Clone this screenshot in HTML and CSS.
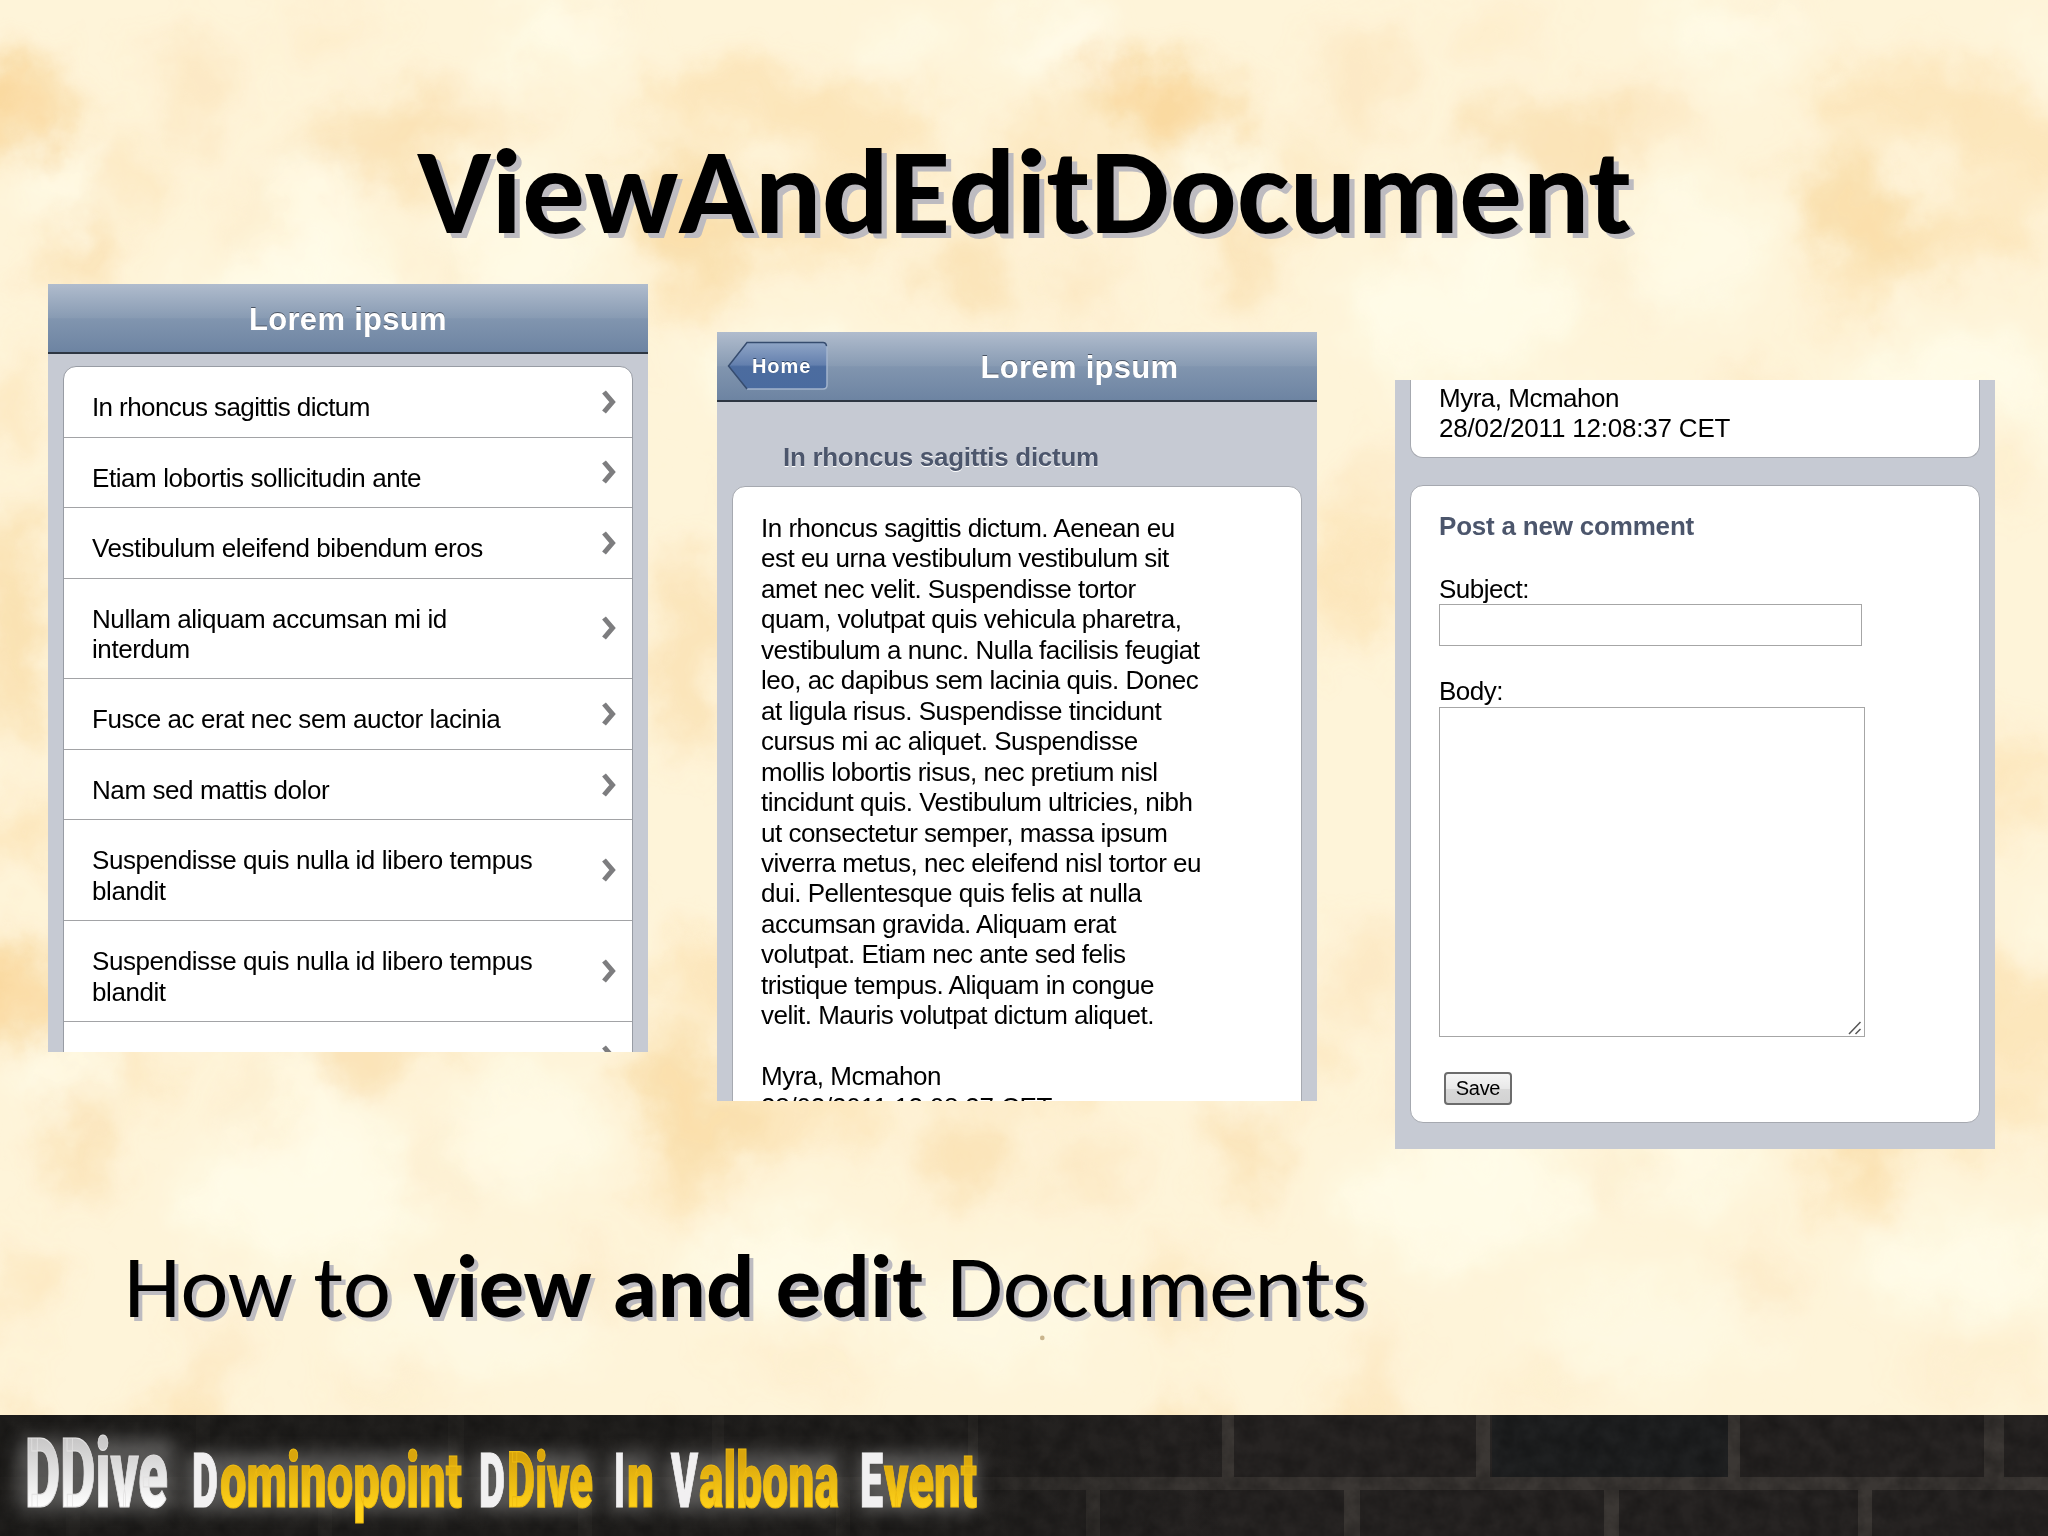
FILE: index.html
```html
<!DOCTYPE html>
<html lang="en">
  <head>
    <meta charset="UTF-8" />
    <meta name="viewport" content="width=device-width, initial-scale=1.0" />
    <title>ViewAndEditDocument</title>
    <link rel="stylesheet" href="styles.css">
  </head>
  <body>
    <div class="slide">
      <!-- parchment: one tile, repeated -->
      <svg class="paper" viewBox="0 0 1568 1083" preserveAspectRatio="none" aria-hidden="true">
        <defs>
          <filter id="rough" x="-5%" y="-5%" width="110%" height="110%">
            <feGaussianBlur stdDeviation="15" result="soft" />
            <feTurbulence type="fractalNoise" baseFrequency="0.02" numOctaves="5" seed="8" result="noise" />
            <feDisplacementMap in="soft" in2="noise" scale="60" xChannelSelector="R" yChannelSelector="G" />
          </filter>
          <g id="tile">
            <g fill="#f8cd86">
              <ellipse cx="15" cy="85" rx="48" ry="36" opacity=".55" />
              <ellipse cx="-30" cy="68" rx="50" ry="26" opacity=".5" />
              <ellipse cx="150" cy="65" rx="32" ry="42" opacity=".25" />
              <ellipse cx="100" cy="135" rx="22" ry="30" opacity=".3" />
              <ellipse cx="290" cy="110" rx="60" ry="34" opacity=".4" />
              <ellipse cx="360" cy="90" rx="50" ry="22" opacity=".25" />
              <ellipse cx="560" cy="75" rx="70" ry="30" opacity=".35" />
              <ellipse cx="660" cy="105" rx="60" ry="40" opacity=".35" />
              <ellipse cx="515" cy="145" rx="36" ry="30" opacity=".5" />
              <ellipse cx="545" cy="185" rx="40" ry="28" opacity=".5" />
              <ellipse cx="525" cy="228" rx="28" ry="24" opacity=".35" />
              <ellipse cx="620" cy="175" rx="60" ry="24" opacity=".35" />
              <ellipse cx="740" cy="205" rx="36" ry="34" opacity=".4" />
              <ellipse cx="800" cy="130" rx="44" ry="40" opacity=".3" />
              <ellipse cx="830" cy="220" rx="30" ry="30" opacity=".25" />
              <ellipse cx="60" cy="200" rx="24" ry="34" opacity=".4" />
              <ellipse cx="350" cy="205" rx="22" ry="30" opacity=".25" />
              <ellipse cx="200" cy="165" rx="22" ry="34" opacity=".25" />
              <ellipse cx="460" cy="12" rx="18" ry="12" opacity=".5" />
              <ellipse cx="250" cy="20" rx="40" ry="14" opacity=".2" />
              <ellipse cx="160" cy="367" rx="18" ry="30" opacity=".25" />
              <ellipse cx="300" cy="385" rx="50" ry="20" opacity=".12" />
              <ellipse cx="446" cy="305" rx="24" ry="28" opacity=".25" />
              <ellipse cx="620" cy="365" rx="60" ry="18" opacity=".12" />
              <ellipse cx="12" cy="310" rx="20" ry="34" opacity=".3" />
              <ellipse cx="10" cy="480" rx="24" ry="90" opacity=".5" />
              <ellipse cx="525" cy="500" rx="28" ry="80" opacity=".4" />
              <ellipse cx="140" cy="440" rx="30" ry="60" opacity=".35" />
              <ellipse cx="640" cy="600" rx="24" ry="40" opacity=".35" />
              <ellipse cx="20" cy="640" rx="30" ry="30" opacity=".35" />
            </g>
            <g fill="#fffdec">
              <ellipse cx="430" cy="26" rx="52" ry="26" opacity=".7" />
              <ellipse cx="810" cy="30" rx="50" ry="24" opacity=".8" />
              <ellipse cx="690" cy="34" rx="34" ry="16" opacity=".6" />
              <ellipse cx="240" cy="170" rx="44" ry="44" opacity=".6" />
              <ellipse cx="50" cy="140" rx="34" ry="20" opacity=".7" />
              <ellipse cx="400" cy="190" rx="60" ry="50" opacity=".6" />
              <ellipse cx="230" cy="240" rx="90" ry="50" opacity=".7" />
              <ellipse cx="610" cy="290" rx="80" ry="34" opacity=".7" />
              <ellipse cx="760" cy="330" rx="90" ry="40" opacity=".5" />
              <ellipse cx="370" cy="340" rx="100" ry="36" opacity=".5" />
            </g>
          </g>
        </defs>
        <rect width="1568" height="1083" fill="#fef4d9" />
        <g filter="url(#rough)">
          <use href="#tile" />
          <use href="#tile" x="894" />
          <use href="#tile" y="679" />
          <use href="#tile" x="894" y="679" />
        </g>
        <circle cx="798" cy="1024" r="1.8" fill="#c9b48c" />
      </svg>

      <h1 class="title">
        <svg width="2048" height="284" role="img">
          <text x="417" y="233" textLength="1215" lengthAdjust="spacingAndGlyphs">ViewAndEditDocument</text>
        </svg>
      </h1>

      <div class="screens">
        <div class="phone list-view">
          <div class="toolbar"><span class="bar-title">Lorem ipsum</span></div>
          <ul class="items">
            <li><span class="tight">In rhoncus sagittis dictum</span><svg class="arrow" viewBox="0 0 14 24"><path d="M2 2L10.500 12L2 22" /></svg></li>
            <li><span>Etiam lobortis sollicitudin ante</span><svg class="arrow" viewBox="0 0 14 24"><path d="M2 2L10.500 12L2 22" /></svg></li>
            <li><span>Vestibulum eleifend bibendum eros</span><svg class="arrow" viewBox="0 0 14 24"><path d="M2 2L10.500 12L2 22" /></svg></li>
            <li><span>Nullam aliquam accumsan mi id<br>interdum</span><svg class="arrow" viewBox="0 0 14 24"><path d="M2 2L10.500 12L2 22" /></svg></li>
            <li><span>Fusce ac erat nec sem auctor lacinia</span><svg class="arrow" viewBox="0 0 14 24"><path d="M2 2L10.500 12L2 22" /></svg></li>
            <li><span>Nam sed mattis dolor</span><svg class="arrow" viewBox="0 0 14 24"><path d="M2 2L10.500 12L2 22" /></svg></li>
            <li><span>Suspendisse quis nulla id libero tempus<br>blandit</span><svg class="arrow" viewBox="0 0 14 24"><path d="M2 2L10.500 12L2 22" /></svg></li>
            <li><span>Suspendisse quis nulla id libero tempus<br>blandit</span><svg class="arrow" viewBox="0 0 14 24"><path d="M2 2L10.500 12L2 22" /></svg></li>
            <li><svg class="arrow" viewBox="0 0 14 24"><path d="M2 2L10.500 12L2 22" /></svg></li>
          </ul>
        </div>

        <div class="phone document-view">
          <div class="toolbar">
            <a class="back">
              <svg viewBox="0 0 102 50">
                <defs>
                  <linearGradient id="backFill" x1="0" y1="0" x2="0" y2="1">
                    <stop offset="0" stop-color="#8fa5c6" />
                    <stop offset=".48" stop-color="#6480ae" />
                    <stop offset=".52" stop-color="#4c6c9f" />
                    <stop offset="1" stop-color="#4a6b9f" />
                  </linearGradient>
                </defs>
                <path d="M20 1.500H96Q100 1.500 100 6V44Q100 48 96 48H20L1.500 25Z" fill="url(#backFill)" />
                <path d="M100 6V44Q100 48 96 48H20" fill="none" stroke="#a3b4cd" stroke-width="1.500" />
                <path d="M20 48L1.500 25L20 1.500H96Q99 1.500 99.500 5" fill="none" stroke="#364c6f" stroke-width="1.500" />
              </svg>
              <span>Home</span>
            </a>
            <span class="bar-title">Lorem ipsum</span>
          </div>
          <h2>In rhoncus sagittis dictum</h2>
          <div class="card">
            <p>
              In rhoncus sagittis dictum. Aenean eu<br>
              est eu urna vestibulum vestibulum sit<br>
              amet nec velit. Suspendisse tortor<br>
              quam, volutpat quis vehicula pharetra,<br>
              vestibulum a nunc. Nulla facilisis feugiat<br>
              leo, ac dapibus sem lacinia quis. Donec<br>
              at ligula risus. Suspendisse tincidunt<br>
              cursus mi ac aliquet. Suspendisse<br>
              mollis lobortis risus, nec pretium nisl<br>
              tincidunt quis. Vestibulum ultricies, nibh<br>
              ut consectetur semper, massa ipsum<br>
              viverra metus, nec eleifend nisl tortor eu<br>
              dui. Pellentesque quis felis at nulla<br>
              accumsan gravida. Aliquam erat<br>
              volutpat. Etiam nec ante sed felis<br>
              tristique tempus. Aliquam in congue<br>
              velit. Mauris volutpat dictum aliquet.<br>
              <br>
              Myra, Mcmahon<br>
              <span class="date">28/02/2011 12:08:37 CET</span>
            </p>
          </div>
        </div>

        <div class="phone comment-view">
          <div class="card author">
            <p>Myra, Mcmahon<br><span class="date">28/02/2011 12:08:37 CET</span></p>
          </div>
          <form class="card comment">
            <h3>Post a new comment</h3>
            <label for="subject">Subject:</label>
            <input type="text" id="subject" />
            <label for="body">Body:</label>
            <div class="area">
              <textarea id="body"></textarea>
              <svg class="grip" viewBox="0 0 14 14"><path d="M1 13L12.500 1M7.500 13L12.500 8" /></svg>
            </div>
            <button type="button">Save</button>
          </form>
        </div>
      </div>

      <div class="caption">
        <svg width="2048" height="120" role="img">
          <text x="124" y="97" textLength="267" lengthAdjust="spacingAndGlyphs">How to</text>
          <text class="strong" x="413" y="97" textLength="511" lengthAdjust="spacingAndGlyphs">view and edit</text>
          <text x="947" y="97" textLength="420" lengthAdjust="spacingAndGlyphs">Documents</text>
        </svg>
      </div>

      <div class="footer">
        <svg width="2048" height="121" role="img">
          <defs>
            <linearGradient id="silver" x1="0" y1="0" x2="0" y2="1">
              <stop offset=".2" stop-color="#c9c8c8" />
              <stop offset=".8" stop-color="#fff" />
            </linearGradient>
            <linearGradient id="gold" x1="0" y1="0" x2="0" y2="1">
              <stop offset=".25" stop-color="#d9a50c" />
              <stop offset=".8" stop-color="#ffd21a" />
            </linearGradient>
            <linearGradient id="fade">
              <stop offset="0" stop-color="#1e1d1b" stop-opacity=".85" />
              <stop offset=".45" stop-color="#1e1d1b" stop-opacity=".65" />
              <stop offset=".6" stop-color="#1e1d1b" stop-opacity="0" />
            </linearGradient>
            <filter id="grain" x="0" y="0" width="100%" height="100%">
              <feTurbulence type="fractalNoise" baseFrequency="0.05" numOctaves="4" seed="3" />
              <feColorMatrix values="0 0 0 0 0  0 0 0 0 0  0 0 0 0 0  1.200 0 0 0 -.35" />
            </filter>
            <filter id="halo" x="-10%" y="-50%" width="120%" height="200%">
              <feGaussianBlur stdDeviation="9" />
            </filter>
          </defs>
          <rect width="2048" height="121" fill="#272423" />
          <rect x="1492" width="236" height="62" fill="#1f2021" />
          <g fill="#3b3734">
            <rect y="62" width="2048" height="13" />
            <rect x="196" width="14" height="62" />
            <rect x="448" width="16" height="62" />
            <rect x="712" width="12" height="62" />
            <rect x="968" width="10" height="62" />
            <rect x="1222" width="12" height="62" />
            <rect x="1476" width="14" height="62" />
            <rect x="1728" width="12" height="62" />
            <rect x="1984" width="20" height="62" />
            <rect x="66" y="75" width="14" height="46" />
            <rect x="318" y="75" width="14" height="46" />
            <rect x="578" y="75" width="14" height="46" />
            <rect x="836" y="75" width="14" height="46" />
            <rect x="1086" y="75" width="14" height="46" />
            <rect x="1344" y="75" width="16" height="46" />
            <rect x="1604" y="75" width="15" height="46" />
            <rect x="1858" y="75" width="14" height="46" />
          </g>
          <rect width="2048" height="121" fill="url(#fade)" />
          <rect width="2048" height="121" filter="url(#grain)" opacity=".4" />
          <g filter="url(#halo)" fill="#fff" opacity=".26">
            <rect x="18" y="24" width="156" height="72" />
            <rect x="186" y="38" width="276" height="58" />
            <rect x="476" y="38" width="116" height="58" />
            <rect x="610" y="38" width="44" height="58" />
            <rect x="668" y="38" width="172" height="58" />
            <rect x="858" y="38" width="120" height="58" />
          </g>
          <g class="logo">
            <text class="big" x="25" y="107" textLength="143" lengthAdjust="spacingAndGlyphs">DDive</text>
            <text class="cap" x="192" y="107" textLength="26" lengthAdjust="spacingAndGlyphs">D</text>
            <text x="220" y="107" textLength="242" lengthAdjust="spacingAndGlyphs">ominopoint</text>
            <text class="cap" x="479" y="107" textLength="26" lengthAdjust="spacingAndGlyphs">D</text>
            <text x="507" y="107" textLength="86" lengthAdjust="spacingAndGlyphs">Dive</text>
            <text class="cap" x="614" y="107" textLength="11" lengthAdjust="spacingAndGlyphs">I</text>
            <text x="627" y="107" textLength="27" lengthAdjust="spacingAndGlyphs">n</text>
            <text class="cap" x="671" y="107" textLength="27" lengthAdjust="spacingAndGlyphs">V</text>
            <text x="699" y="107" textLength="140" lengthAdjust="spacingAndGlyphs">albona</text>
            <text class="cap" x="860" y="107" textLength="23" lengthAdjust="spacingAndGlyphs">E</text>
            <text x="884" y="107" textLength="93" lengthAdjust="spacingAndGlyphs">vent</text>
          </g>
        </svg>
      </div>
    </div>
  </body>
</html>
```
FILE: styles.css
```css
* {
  box-sizing: border-box;
}
body {
  margin: 0;
}
.slide {
  position: relative;
  width: 2048px;
  height: 1536px;
  overflow: hidden;
  display: flex;
  flex-direction: column;
}
.paper {
  position: absolute;
  left: 0;
  top: 0;
  width: 2048px;
  height: 1415px;
  z-index: -1;
}
svg {
  display: block;
}
.title,
.caption {
  margin: 0;
  font-family: Carlito, Lato, sans-serif;
}
.title text {
  font-size: 122px;
  font-weight: bold;
  text-shadow: 5px 5px 0 #bdbbc0;
}
.caption {
  height: 195px;
}
.caption text {
  font-size: 89px;
  font-weight: normal;
  text-shadow: 4px 4px 0 #bdbbc0;
}
.caption .strong {
  font-weight: bold;
}

/* phone screens */
.screens {
  display: flex;
  align-items: flex-start;
  height: 936px;
  padding-left: 48px;
  font-family: Arial, "Liberation Sans", sans-serif;
  font-size: 26px;
  line-height: 30.46px;
  letter-spacing: -0.5px;
  white-space: nowrap;
}
.phone {
  width: 600px;
  height: 768px;
  overflow: hidden;
  background: #c6cad3;
}
.list-view {
  letter-spacing: -0.42px;
}
.document-view {
  height: 769px;
  margin: 48px 0 0 69px;
}
.comment-view {
  height: 769px;
  margin: 96px 0 0 78px;
}
.toolbar {
  display: flex;
  align-items: center;
  height: 70px;
  border-bottom: 2px solid #2d3642;
  background: linear-gradient(#b0bccd, #889bb3 50%, #8195af 51%, #6d84a2);
}
.bar-title {
  width: 100%;
  padding-top: 5px;
  text-align: center;
  color: #fff;
  font-size: 31px;
  font-weight: bold;
  letter-spacing: 0.3px;
  text-shadow: 0 -1px 0 #4a5361;
}
.items {
  margin: 12px 15px 0;
  padding: 0;
  list-style: none;
  border: 1px solid #989ca4;
  border-radius: 13px 13px 0 0;
  background: #fff;
}
.items li {
  display: flex;
  justify-content: space-between;
  align-items: center;
  min-height: 70.5px;
  padding: 25px 16px 14px 28px;
  border-bottom: 1.5px solid #a2a3a6;
}
.items .tight {
  letter-spacing: -0.6px;
}
.arrow {
  width: 14px;
  height: 24px;
  margin-top: -11px;
  margin-left: auto;
  fill: none;
  stroke: #7d7d7f;
  stroke-width: 5;
}
.back {
  position: relative;
  flex: none;
  width: 102px;
  height: 50px;
  margin-left: 10px;
}
.back span {
  position: absolute;
  left: 25px;
  top: 10px;
  color: #fff;
  font-size: 20px;
  font-weight: bold;
  letter-spacing: 0.9px;
  text-shadow: 0 -1px 0 #2f4567;
}
.document-view .bar-title {
  padding-left: 13px;
}
h2 {
  margin: 40px 0 14px 66px;
  color: #4c566c;
  font-size: 26px;
  line-height: 30px;
  letter-spacing: -0.3px;
  text-shadow: 0 1px 0 #fff;
}
.card {
  margin: 0 15px;
  border: 1px solid #a6a9b0;
  border-radius: 13px;
  background: #fff;
}
.card p {
  margin: 0;
}
.date {
  letter-spacing: -0.2px;
}
.document-view .card {
  padding: 26px 28px;
}
.author {
  height: 78px;
  border-top: 0;
  border-radius: 0 0 13px 13px;
  padding: 3px 28px;
}
.comment {
  height: 638px;
  margin-top: 27px;
  padding: 25px 28px;
}
.comment h3 {
  margin: 0 0 32px;
  color: #4c566c;
  font-size: 26px;
  line-height: 31px;
  letter-spacing: -0.2px;
}
.comment label {
  display: block;
}
.comment input {
  display: block;
  width: 423px;
  height: 42px;
  margin: 0 0 30px;
  border: 1.5px solid #a6a6a6;
}
.area {
  position: relative;
  width: 426px;
}
.comment textarea {
  display: block;
  width: 426px;
  height: 330px;
  border: 1.5px solid #a6a6a6;
  resize: none;
}
.grip {
  position: absolute;
  right: 3px;
  bottom: 2px;
  width: 14px;
  height: 14px;
  stroke: #555;
  stroke-width: 1.5;
}
.comment button {
  width: 68px;
  height: 33px;
  margin: 35px 0 0 5px;
  padding: 0;
  border: 2px solid #6c6c6c;
  border-radius: 4px;
  background: linear-gradient(#f6f6f6, #e8e8e8 50%, #d8d8d8 52%, #d2d2d2);
  font-family: Arial, "Liberation Sans", sans-serif;
  font-size: 20px;
  letter-spacing: -0.3px;
}

/* footer */
.footer {
  height: 121px;
}
.logo {
  transform: translateY(-15px);
}
.logo text {
  font-family: Roboto, sans-serif;
  font-weight: 900;
  font-size: 78px;
  fill: url(#gold);
  stroke: #eebb10;
  stroke-width: 1.2;
}
.logo .cap {
  font-size: 76px;
  fill: #f1f0f1;
  stroke: #f1f0f1;
}
.logo .big {
  font-size: 96px;
  fill: url(#silver);
  stroke: #e2e1e1;
}
```
